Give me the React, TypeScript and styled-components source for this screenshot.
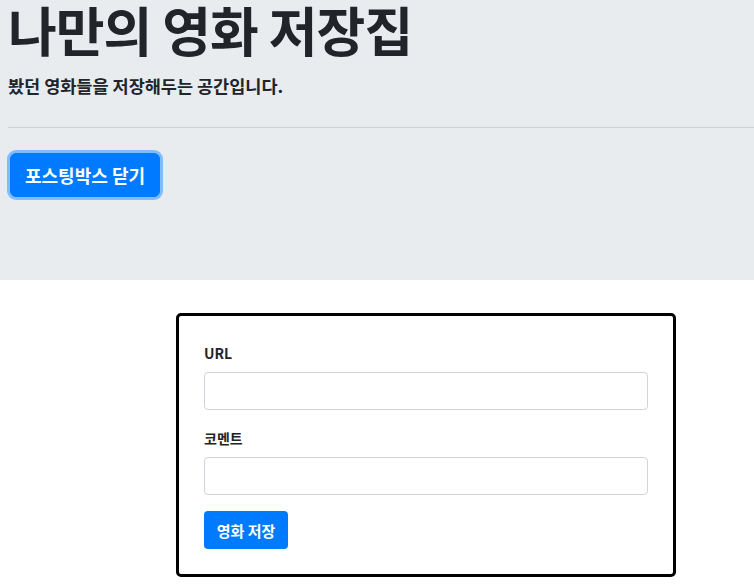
import styled, { createGlobalStyle } from "styled-components";

const GlobalStyle = createGlobalStyle`
  html, body {
    margin: 0;
    padding: 0;
    background: #ffffff;
    color: #212529;
    font-family: "Noto Sans CJK KR", "Noto Sans", sans-serif;
  }
  * {
    box-sizing: border-box;
  }
`;

const Jumbotron = styled.header`
  background: #e9ecef;
  height: 280px;
  padding: 0 0 0 8px;
  display: flex;
  flex-direction: column;
`;

const Title = styled.h1`
  font-size: 53px;
  font-weight: 700;
  line-height: 58px;
  margin: 0;
  letter-spacing: -1px;
`;

const Lead = styled.p`
  font-size: 17.5px;
  font-weight: 700;
  line-height: 24px;
  margin: 16px 0 0;
`;

const Divider = styled.hr`
  border: 0;
  border-top: 1px solid #ced1d4;
  margin: 29px 0 25px;
`;

const ToggleButton = styled.button`
  align-self: flex-start;
  background: #007bff;
  border: 1px solid #007bff;
  border-radius: 6px;
  box-shadow: 0 0 0 3px #80bdff;
  color: #ffffff;
  cursor: pointer;
  font-family: inherit;
  font-size: 18px;
  font-weight: 700;
  height: 44px;
  margin-left: 2px;
  padding: 0 14px;
`;

const Card = styled.form`
  border: 3px solid #000000;
  border-radius: 5px;
  margin: 33px 0 0 176px;
  padding: 25px 25px 25px;
  width: 500px;
`;

const FormGroup = styled.div`
  margin-bottom: 16px;
`;

const Label = styled.label`
  display: block;
  font-size: 14px;
  font-weight: 700;
  line-height: 24px;
  margin-bottom: 7px;
`;

const Input = styled.input`
  border: 1px solid #ced4da;
  border-radius: 4px;
  display: block;
  height: 38px;
  width: 100%;
`;

const SaveButton = styled.button`
  background: #007bff;
  border: 0;
  border-radius: 4px;
  color: #ffffff;
  font-family: inherit;
  font-size: 15px;
  font-weight: 700;
  height: 38px;
  padding: 0 12px;
  width: 84px;
`;

export default function App(): JSX.Element {
  return (
    <>
      <GlobalStyle />
      <Jumbotron>
        <Title>나만의 영화 저장집</Title>
        <Lead>봤던 영화들을 저장해두는 공간입니다.</Lead>
        <Divider />
        <ToggleButton type="button">포스팅박스 닫기</ToggleButton>
      </Jumbotron>
      <Card onSubmit={e => e.preventDefault()}>
        <FormGroup>
          <Label htmlFor="url">URL</Label>
          <Input id="url" type="text" />
        </FormGroup>
        <FormGroup>
          <Label htmlFor="comment">코멘트</Label>
          <Input id="comment" type="text" />
        </FormGroup>
        <SaveButton type="submit">영화 저장</SaveButton>
      </Card>
    </>
  );
}
